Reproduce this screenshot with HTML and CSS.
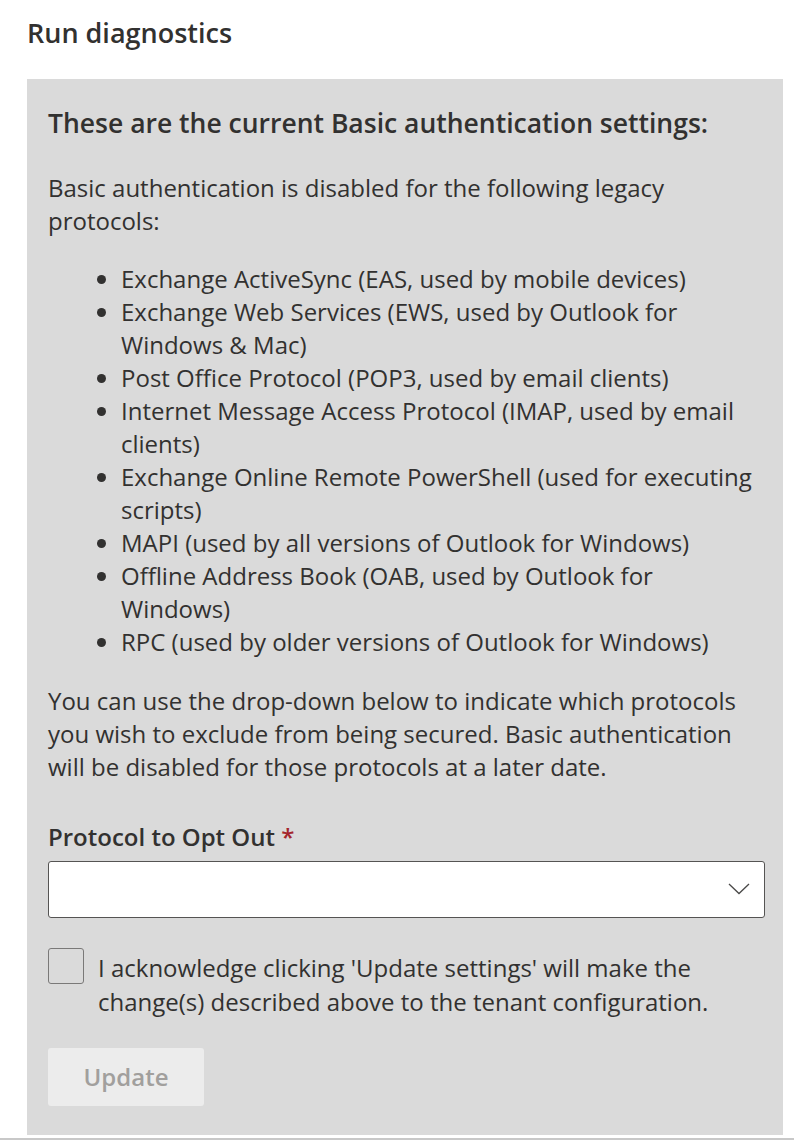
FILE: index.html
```html
<!DOCTYPE html>
<html>
<head>
<meta charset="utf-8">
<link rel="stylesheet" href="styles.css">
</head>
<body>
<div class="page">
  <h1 class="title">Run diagnostics</h1>
  <section class="panel">
    <h2 class="heading">These are the current Basic authentication settings:</h2>
    <p class="text">Basic authentication is disabled for the following legacy protocols:</p>
    <ul class="list">
      <li>Exchange ActiveSync (EAS, used by mobile devices)</li>
      <li>Exchange Web Services (EWS, used by Outlook for Windows &amp; Mac)</li>
      <li>Post Office Protocol (POP3, used by email clients)</li>
      <li>Internet Message Access Protocol (IMAP, used by email clients)</li>
      <li>Exchange Online Remote PowerShell (used for executing scripts)</li>
      <li>MAPI (used by all versions of Outlook for Windows)</li>
      <li>Offline Address Book (OAB, used by Outlook for Windows)</li>
      <li>RPC (used by older versions of Outlook for Windows)</li>
    </ul>
    <p class="text">You can use the drop-down below to indicate which protocols you wish to exclude from being secured. Basic authentication will be disabled for those protocols at a later date.</p>
    <div class="field">
      <label class="label">Protocol to Opt Out <span class="req">*</span></label>
      <div class="dropdown">
        <svg class="chevron" width="22" height="12" viewBox="0 0 22 12"><path d="M1 1 L11 10.5 L21 1" fill="none" stroke="#4a4948" stroke-width="1.3"/></svg>
      </div>
    </div>
    <div class="check">
      <span class="box"></span>
      <span class="check-text">I acknowledge clicking 'Update settings' will make the change(s) described above to the tenant configuration.</span>
    </div>
    <button class="btn" disabled>Update</button>
  </section>
</div>
</body>
</html>
```
FILE: styles.css
```css
html, body {
  margin: 0;
  padding: 0;
  background: #ffffff;
}
body {
  font-family: "Open Sans", "Noto Sans", sans-serif;
  color: #323130;
  height: 1140px;
  overflow: hidden;
  border-bottom: 2px solid #c8c8c8;
  box-sizing: border-box;
}
.page {
  padding: 0 11px 0 27px;
}
.title {
  margin: 0;
  padding-top: 15px;
  height: 79px;
  box-sizing: border-box;
  font-size: 27px;
  font-weight: 600;
  line-height: 36px;
}
.panel {
  background: #dadada;
  padding: 26px 18px 30px 21px;
  height: 1056px;
  box-sizing: border-box;
}
.heading {
  margin: 0 0 30px;
  font-size: 26.5px;
  font-weight: 600;
  line-height: 36px;
}
.text {
  margin: 0;
  font-size: 24px;
  line-height: 33px;
}
.list {
  margin: 25px 0 26px;
  padding-left: 73px;
  font-size: 24px;
  line-height: 33px;
}
.field {
  margin-top: 37px;
}
.label {
  display: block;
  font-size: 24px;
  font-weight: 600;
  line-height: 33px;
  margin-bottom: 7.5px;
}
.req {
  color: #a4262c;
}
.dropdown {
  height: 57px;
  background: #ffffff;
  border: 1.5px solid #555453;
  border-radius: 3px;
  box-sizing: border-box;
  display: flex;
  align-items: center;
  justify-content: flex-end;
  padding-right: 14px;
}
.check {
  display: flex;
  gap: 14px;
  margin-top: 30px;
}
.box {
  flex: none;
  width: 36px;
  height: 36px;
  border: 1.5px solid #7a7978;
  border-radius: 3px;
  box-sizing: border-box;
  margin-top: 0;
}
.check-text {
  font-size: 24px;
  line-height: 34px;
  margin-top: 3px;
}
.btn {
  margin-top: 29px;
  width: 156px;
  height: 58px;
  border: none;
  border-radius: 3px;
  background: #ececec;
  color: #a19f9d;
  font-family: inherit;
  font-size: 24px;
  font-weight: 600;
}
```
